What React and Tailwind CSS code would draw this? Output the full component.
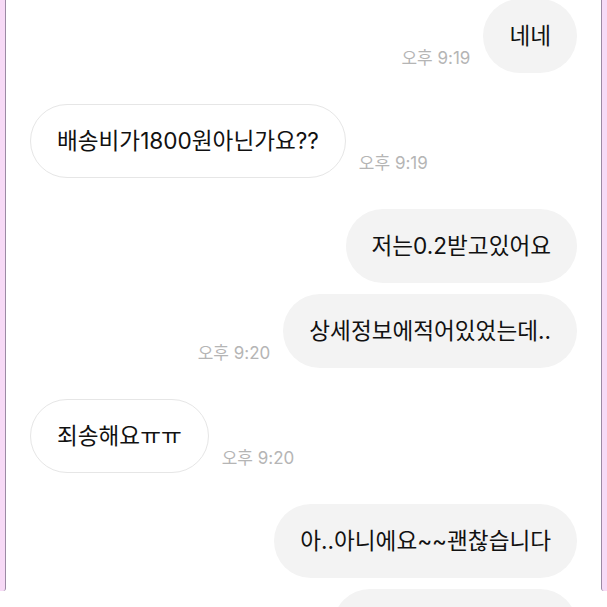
const messages = [
  { id: 1, mine: true, text: "네네", time: "오후 9:19" },
  { id: 2, mine: false, text: "배송비가1800원아닌가요??", time: "오후 9:19", gap: true },
  { id: 3, mine: true, text: "저는0.2받고있어요", gap: true },
  { id: 4, mine: true, text: "상세정보에적어있었는데..", time: "오후 9:20" },
  { id: 5, mine: false, text: "죄송해요ㅠㅠ", time: "오후 9:20", gap: true },
  { id: 6, mine: true, text: "아..아니에요~~괜찮습니다", gap: true },
  { id: 7, mine: true, text: "", },
]

function Bubble({ mine, text }) {
  return (
    <div
      className={
        "h-[74px] flex items-center px-[26px] rounded-full text-[22.6px] text-[#111] whitespace-nowrap " +
        (mine ? "bg-[#f3f3f3]" : "bg-white border border-[#e6e6e6]")
      }
    >
      {text}
    </div>
  )
}

function Time({ time }) {
  return <span className="mb-[2px] text-[17px] text-[#b5b5b5] whitespace-nowrap">{time}</span>
}

export default function App() {
  return (
    <div
      className="relative h-[607px] w-[607px] overflow-hidden bg-white flex"
      style={{ fontFamily: 'Inter, "Noto Sans CJK KR", "Noto Sans", sans-serif' }}
    >
      {/* left frame strip */}
      <div className="w-[6px] h-[591px] shrink-0 bg-[#f7daf6] border-r border-[#9c8aa4] rounded-br-[3px]" />

      {/* chat */}
      <div className="flex-1 flex flex-col pl-[24px] pr-[24px] -mt-[1px]">
        {messages.map((m) => (
          <div
            key={m.id}
            className={
              "flex items-end gap-[13px] " +
              (m.mine ? "justify-end " : "justify-start ") +
              (m.id === 1 ? "" : m.gap ? "mt-[31px]" : "mt-[11px]")
            }
          >
            {m.mine && m.time && <Time time={m.time} />}
            {m.id === 7 ? (
              <div className="h-[74px] w-[244px] rounded-full bg-[#f3f3f3]" />
            ) : (
              <Bubble mine={m.mine} text={m.text} />
            )}
            {!m.mine && m.time && <Time time={m.time} />}
          </div>
        ))}
      </div>

      {/* right frame strip */}
      <div className="w-[6px] h-[591px] shrink-0 bg-[#f7daf6] border-l border-[#9c8aa4] rounded-bl-[3px]" />
    </div>
  )
}
